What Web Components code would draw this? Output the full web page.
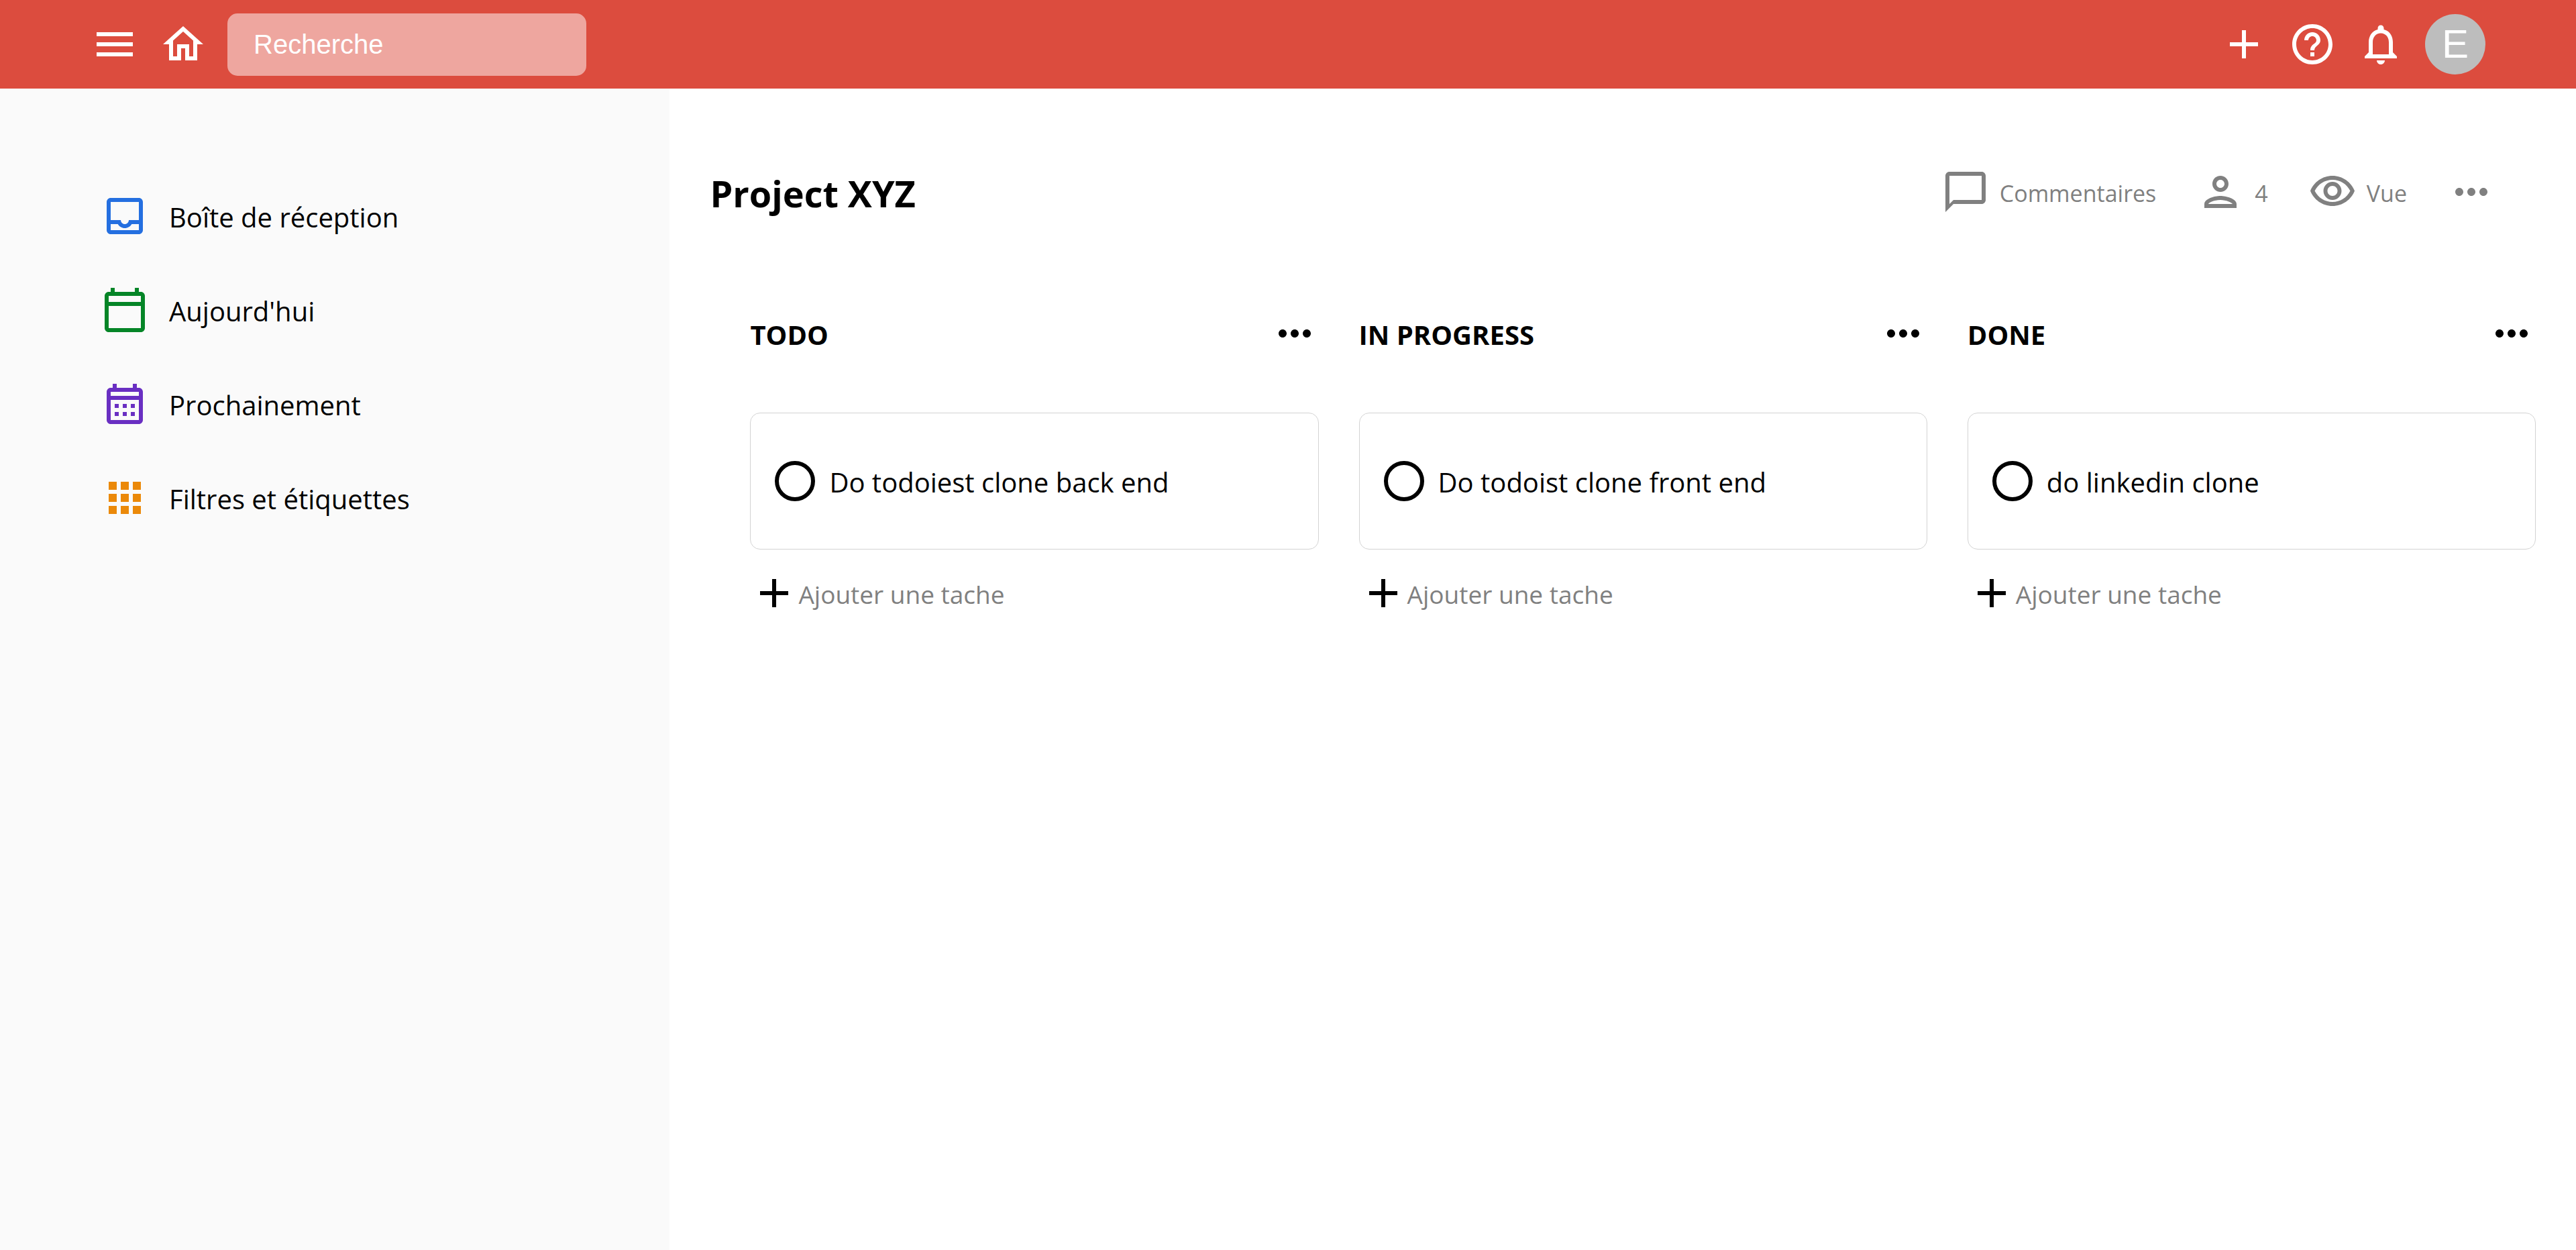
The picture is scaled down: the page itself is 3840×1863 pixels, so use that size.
<!DOCTYPE html>
<html lang="fr">
<head>
<meta charset="utf-8">
<meta name="viewport" content="width=device-width, initial-scale=1">
<title>Project XYZ</title>
<style>
  body { margin: 0; background: #fff; color: #000; font-family: "Open Sans", "Noto Sans", sans-serif; }
</style>
</head>
<body>
<todo-app>
  <top-bar slot="top"></top-bar>
  <side-bar slot="side">
    <nav-item icon="inbox" style="--icon-color:#246fe0">Boîte de réception</nav-item>
    <nav-item icon="today" style="--icon-color:#058527">Aujourd'hui</nav-item>
    <nav-item icon="month" style="--icon-color:#692fc2">Prochainement</nav-item>
    <nav-item icon="apps" style="--icon-color:#eb8909">Filtres et étiquettes</nav-item>
  </side-bar>
  <project-header>
    Project XYZ
    <tool-button slot="tools" icon="chat">Commentaires</tool-button>
    <tool-button slot="tools" icon="person">4</tool-button>
    <tool-button slot="tools" icon="eye">Vue</tool-button>
    <icon-button slot="tools" icon="more" label="Plus d'options"></icon-button>
  </project-header>
  <task-board>
    <task-column name="TODO"><task-card>Do todoiest clone back end</task-card></task-column>
    <task-column name="IN PROGRESS"><task-card>Do todoist clone front end</task-card></task-column>
    <task-column name="DONE"><task-card>do linkedin clone</task-card></task-column>
  </task-board>
</todo-app>

<script>
const ICONS = {
  menu: "M3 18h18v-2H3v2zm0-5h18v-2H3v2zm0-7v2h18V6H3z",
  home: "m12 5.69 5 4.5V18h-2v-6H9v6H7v-7.81l5-4.5M12 3 2 12h3v8h6v-6h2v6h6v-8h3L12 3z",
  add: "M19 13h-6v6h-2v-6H5v-2h6V5h2v6h6v2z",
  help: "M11 18h2v-2h-2v2zm1-16C6.48 2 2 6.48 2 12s4.48 10 10 10 10-4.48 10-10S17.52 2 12 2zm0 18c-4.41 0-8-3.59-8-8s3.59-8 8-8 8 3.59 8 8-3.59 8-8 8zm0-14c-2.21 0-4 1.79-4 4h2c0-1.1.9-2 2-2s2 .9 2 2c0 2-3 1.75-3 5h2c0-2.25 3-2.5 3-5 0-2.21-1.79-4-4-4z",
  bell: "M12 22c1.1 0 2-.9 2-2h-4c0 1.1.9 2 2 2zm6-6v-5c0-3.07-1.63-5.64-4.5-6.32V4c0-.83-.67-1.5-1.5-1.5s-1.5.67-1.5 1.5v.68C7.64 5.36 6 7.92 6 11v5l-2 2v1h16v-1l-2-2zm-2 1H8v-6c0-2.48 1.51-4.5 4-4.5s4 2.02 4 4.5v6z",
  inbox: "M19 3H5c-1.1 0-2 .9-2 2v14c0 1.1.9 2 2 2h14c1.1 0 2-.9 2-2V5c0-1.1-.9-2-2-2zm0 16H5v-3h3.56c.69 1.19 1.97 2 3.45 2s2.75-.81 3.45-2H19v3zm0-5h-4.99c0 1.1-.9 2-2 2s-2-.9-2-2H5V5h14v9z",
  today: "M20 3h-1V1h-2v2H7V1H5v2H4c-1.1 0-2 .9-2 2v16c0 1.1.9 2 2 2h16c1.1 0 2-.9 2-2V5c0-1.1-.9-2-2-2zm0 18H4V10h16v11zm0-13H4V5h16v3z",
  month: "M19 4h-1V2h-2v2H8V2H6v2H5c-1.11 0-1.99.9-1.99 2L3 20c0 1.1.89 2 2 2h14c1.1 0 2-.9 2-2V6c0-1.1-.9-2-2-2zm0 16H5V10h14v10zm0-12H5V6h14v2zM9 14H7v-2h2v2zm4 0h-2v-2h2v2zm4 0h-2v-2h2v2zm-8 4H7v-2h2v2zm4 0h-2v-2h2v2zm4 0h-2v-2h2v2z",
  apps: "M4 8h4V4H4v4zm6 12h4v-4h-4v4zm-6 0h4v-4H4v4zm0-6h4v-4H4v4zm6 0h4v-4h-4v4zm6-10v4h4V4h-4zm-6 4h4V4h-4v4zm6 6h4v-4h-4v4zm0 6h4v-4h-4v4z",
  chat: "M20 2H4c-1.1 0-2 .9-2 2v18l4-4h14c1.1 0 2-.9 2-2V4c0-1.1-.9-2-2-2zm0 14H6l-2 2V4h16v12z",
  person: "M12 6c1.1 0 2 .9 2 2s-.9 2-2 2-2-.9-2-2 .9-2 2-2m0 10c2.7 0 5.8 1.29 6 2H6c.23-.72 3.31-2 6-2m0-12C9.79 4 8 5.79 8 8s1.79 4 4 4 4-1.79 4-4-1.79-4-4-4zm0 10c-2.67 0-8 1.34-8 4v2h16v-2c0-2.66-5.33-4-8-4z",
  eye: "M12 6c3.79 0 7.17 2.13 8.82 5.5C19.17 14.87 15.79 17 12 17s-7.17-2.13-8.82-5.5C4.83 8.13 8.21 6 12 6m0-2C7 4 2.73 7.11 1 11.5 2.73 15.89 7 19 12 19s9.27-3.11 11-7.5C21.27 7.11 17 4 12 4zm0 5c1.38 0 2.5 1.12 2.5 2.5S13.38 14 12 14s-2.5-1.12-2.5-2.5S10.62 9 12 9m0-2c-2.48 0-4.5 2.02-4.5 4.5S9.52 16 12 16s4.5-2.02 4.5-4.5S14.48 7 12 7z",
  more: "M6 10c-1.1 0-2 .9-2 2s.9 2 2 2 2-.9 2-2-.9-2-2-2zm12 0c-1.1 0-2 .9-2 2s.9 2 2 2 2-.9 2-2-.9-2-2-2zm-6 0c-1.1 0-2 .9-2 2s.9 2 2 2 2-.9 2-2-.9-2-2-2z"
};

const RESET = `
  :host, * { box-sizing: border-box; }
  button { margin: 0; padding: 0; border: 0; background: none; color: inherit; font: inherit; cursor: pointer; }
`;

function define(name, render) {
  customElements.define(name, class extends HTMLElement {
    constructor() {
      super();
      this.attachShadow({ mode: "open" });
    }
    connectedCallback() {
      const template = document.createElement("template");
      template.innerHTML = render(this);
      this.shadowRoot.replaceChildren(template.content.cloneNode(true));
    }
  });
}

define("svg-icon", el => `
  <style>
    :host { display: block; flex: none; width: 72px; height: 72px; }
    svg { display: block; width: 100%; height: 100%; fill: currentColor; }
  </style>
  <svg viewBox="0 0 24 24" aria-hidden="true"><path d="${ICONS[el.getAttribute("name")]}"/></svg>`);

define("icon-button", el => `
  <style>${RESET} :host { display: block; flex: none; } button { display: block; }</style>
  <button type="button" aria-label="${el.getAttribute("label")}"><svg-icon name="${el.getAttribute("icon")}"></svg-icon></button>`);

define("tool-button", el => `
  <style>
    ${RESET}
    :host { display: block; }
    button { display: flex; align-items: center; gap: 15px; font-size: 34px; line-height: 48px; }
    span { padding-top: 4px; }
  </style>
  <button type="button"><svg-icon name="${el.getAttribute("icon")}"></svg-icon><span><slot></slot></span></button>`);

define("top-bar", () => `
  <style>
    ${RESET}
    :host { display: block; }
    header, .group { display: flex; align-items: center; }
    header { justify-content: space-between; height: 132px; padding: 0 135px; background: #dc4c3e; color: #fff; }
    .group { gap: 30px; }
    input { width: 535px; height: 93px; padding: 0 39px; border: 0; border-radius: 15px; outline: 0;
            background: rgba(255, 255, 255, .5); color: #fff; font: 40px "Liberation Sans", Arial, sans-serif; }
    input::placeholder { color: #fff; opacity: 1; }
    .avatar { width: 90px; height: 90px; border-radius: 50%; background: #bdbdbd;
              font: 60px/90px "Liberation Sans", Arial, sans-serif; text-align: center; }
  </style>
  <header>
    <div class="group">
      <icon-button icon="menu" label="Menu"></icon-button>
      <icon-button icon="home" label="Accueil"></icon-button>
      <input type="search" placeholder="Recherche" aria-label="Recherche">
    </div>
    <div class="group">
      <icon-button icon="add" label="Ajouter"></icon-button>
      <icon-button icon="help" label="Aide"></icon-button>
      <icon-button icon="bell" label="Notifications"></icon-button>
      <button class="avatar" type="button">E</button>
    </div>
  </header>`);

define("side-bar", () => `
  <style>
    ${RESET}
    :host { display: block; background: #fafafa; }
    nav { display: flex; flex-direction: column; gap: 68px; padding: 154px 60px 60px 150px; }
  </style>
  <nav><slot></slot></nav>`);

define("nav-item", el => `
  <style>
    ${RESET}
    :host { display: block; }
    a { display: flex; align-items: center; gap: 30px; color: inherit; text-decoration: none; font-size: 40px; line-height: 56px; }
    svg-icon { color: var(--icon-color); }
    span { padding-top: 4px; }
  </style>
  <a href="#"><svg-icon name="${el.getAttribute("icon")}"></svg-icon><span><slot></slot></span></a>`);

define("project-header", () => `
  <style>
    ${RESET}
    :host { display: flex; align-items: center; justify-content: space-between; padding-right: 60px; }
    h1 { margin: 0; padding-top: 4px; font-size: 54px; line-height: 68px; font-weight: 700; }
    .tools { display: flex; align-items: center; gap: 60px; color: #808080; }
  </style>
  <h1><slot></slot></h1>
  <div class="tools"><slot name="tools"></slot></div>`);

define("task-board", () => `
  <style>
    ${RESET}
    :host { display: grid; grid-template-columns: repeat(3, minmax(0, 1fr)); gap: 60px; padding-left: 60px; }
  </style>
  <slot></slot>`);

define("task-column", el => `
  <style>
    ${RESET}
    :host { display: block; }
    .head { display: flex; align-items: center; justify-content: space-between; margin-bottom: 82px; }
    h2 { margin: 0; padding-top: 4px; font-size: 40px; line-height: 56px; font-weight: 700; }
    .add { display: flex; align-items: center; margin-top: 29px; font-size: 37px; line-height: 52px; }
    .add span { padding-top: 4px; color: #808080; }
  </style>
  <section>
    <div class="head">
      <h2>${el.getAttribute("name")}</h2>
      <icon-button icon="more" label="Options de la section"></icon-button>
    </div>
    <slot></slot>
    <button class="add" type="button"><svg-icon name="add"></svg-icon><span>Ajouter une tache</span></button>
  </section>`);

define("task-card", () => `
  <style>
    ${RESET}
    :host { display: block; }
    label { display: flex; align-items: center; gap: 21px; padding: 65px 36px; border: 1px solid #d3d3d3;
            border-radius: 15px; font-size: 40px; line-height: 56px; }
    input { appearance: none; flex: none; width: 60px; height: 60px; margin: 6px 0; border: 6px solid #000; border-radius: 50%; }
    input:checked { background: #000; }
    span { padding-top: 4px; }
  </style>
  <label><input type="checkbox"><span><slot></slot></span></label>`);

define("todo-app", () => `
  <style>
    ${RESET}
    :host { display: flex; flex-direction: column; min-height: 100vh; }
    .body { display: flex; flex: 1; }
    ::slotted([slot="side"]) { flex: 0 0 26%; }
    main { display: flex; flex-direction: column; flex: 1; gap: 139px; min-width: 0; padding: 118px 60px 60px; }
  </style>
  <slot name="top"></slot>
  <div class="body">
    <slot name="side"></slot>
    <main><slot></slot></main>
  </div>`);
</script>
</body>
</html>
